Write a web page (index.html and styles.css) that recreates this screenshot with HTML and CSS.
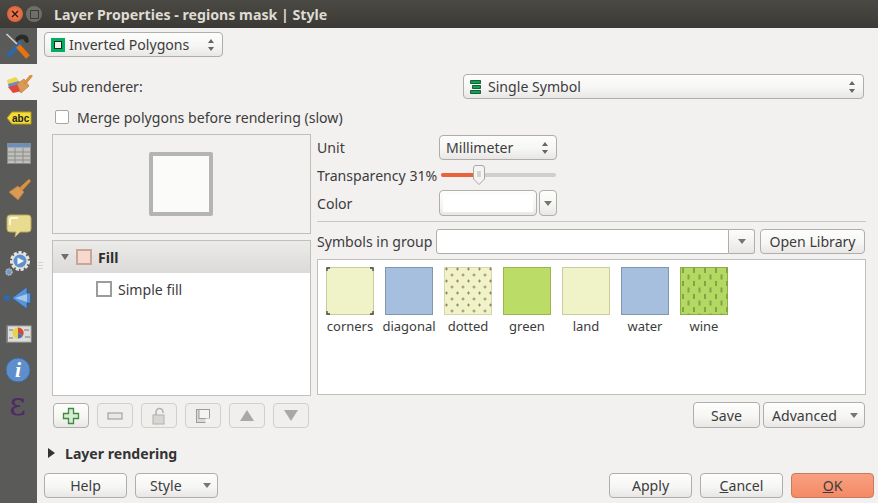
FILE: index.html
```html
<!DOCTYPE html>
<html lang="en">
<head>
  <meta charset="UTF-8">
  <title>Layer Properties - regions mask | Style</title>
  <link rel="stylesheet" href="styles.css">
</head>
<body>
  <header class="titlebar">
    <span class="win-btn win-close">
      <svg width="8" height="8" viewBox="0 0 8 8"><path d="M1 1l6 6M7 1l-6 6" stroke="#3a1a10" stroke-width="1.500"/></svg>
    </span>
    <span class="win-btn win-max"><span class="win-max-box"></span></span>
    <span class="title">Layer Properties - regions mask | Style</span>
  </header>

  <div class="window">
    <nav class="sidebar">
      <div class="tab">
        <svg width="30" height="30" viewBox="0 0 30 30">
          <path d="M2.500 3L14 14" stroke="#cfd2d4" stroke-width="1.600"/>
          <path d="M16 13L5 24" stroke="#2f68a8" stroke-width="4.500" stroke-linecap="round"/>
          <path d="M14 15l10 11" stroke="#e8720c" stroke-width="5"/>
          <path d="M11 8C14 3 20 2 24 6l1 5-3 1-3-4-4 1-2 2z" fill="#2a2a2a"/>
        </svg>
      </div>
      <div class="tab tab-active">
        <svg width="26" height="19" viewBox="0 0 26 19">
          <path d="M0 5l9-3 3 4-11 4z" fill="#ecd84a"/>
          <path d="M1 9l11-3 2 4-12 3z" fill="#6d8cc8"/>
          <path d="M1 12l12-3 2 7-9 2z" fill="#e0483c"/>
          <path d="M10 9l7-5 5 7-8 7z" fill="#d99a58" stroke="#b87a38" stroke-width=".7"/>
          <path d="M18 8l6-7" stroke="#d9913c" stroke-width="3" stroke-linecap="round"/>
        </svg>
      </div>
      <div class="tab">
        <svg width="26" height="18" viewBox="0 0 26 18">
          <path d="M1 9l5-6h19v12H6z" fill="#f3dc3a" stroke="#b49a10"/>
          <text x="6" y="13" class="abc">abc</text>
        </svg>
      </div>
      <div class="tab">
        <svg width="24" height="22" viewBox="0 0 24 22">
          <rect x=".5" y=".5" width="23" height="20" fill="#bfc0bb" stroke="#8c8c88"/>
          <rect x=".5" y=".5" width="23" height="4" fill="#6f8fb8"/>
          <path d="M1 9h22M1 13h22M1 17h22M8 5v16M16 5v16" stroke="#8c8c88"/>
        </svg>
      </div>
      <div class="tab">
        <svg width="24" height="24" viewBox="0 0 24 24">
          <path d="M22 1l2 2-9 10-3-3z" fill="#d9913c"/>
          <path d="M11 8l6 6-6 8-9-8z" fill="#d99a58" stroke="#b87a38" stroke-width=".8"/>
        </svg>
      </div>
      <div class="tab">
        <svg width="26" height="24" viewBox="0 0 26 24">
          <path d="M4 1h18q3 0 3 3v11q0 3-3 3H14l-5 5 1-5H4q-3 0-3-3V4q0-3 3-3z" fill="#e8dc90" stroke="#b8aa58"/>
          <path d="M4 11V6q0-2 2-2h6" stroke="#fff" stroke-width="1.500" fill="none"/>
        </svg>
      </div>
      <div class="tab">
        <svg width="28" height="28" viewBox="0 0 28 28">
          <circle cx="15" cy="13" r="8" fill="#e4e4e2" stroke="#e4e4e2" stroke-width="4" stroke-dasharray="3 1.500"/>
          <circle cx="15" cy="13" r="6.500" fill="#5f90cc"/>
          <path d="M12.500 9.500l6.500 3.500-6.500 3.500z" fill="#fff"/>
          <circle cx="4" cy="24" r="3" fill="#6a9ad0" stroke="#bbb" stroke-width="1.500" stroke-dasharray="1.500 .7"/>
        </svg>
      </div>
      <div class="tab">
        <svg width="30" height="24" viewBox="0 0 30 24">
          <circle cx="3" cy="12" r="3" fill="#2f68b0"/>
          <path d="M8 12L23 1v6h3.500v10H23v6z" fill="#5a94d8" stroke="#2a5a9a" stroke-width=".7"/>
          <path d="M11 12l12-4v8z" fill="#a4c8ee"/>
        </svg>
      </div>
      <div class="tab">
        <svg width="26" height="18" viewBox="0 0 26 18">
          <rect x="1" y="1" width="24" height="16" fill="#dcdcd8" stroke="#aaa"/>
          <path d="M1 1v16" stroke="#777" stroke-width="1.500"/>
          <path d="M18 5h5M19 12h5M3 5h4M3 13h4" stroke="#aaa" stroke-width="2"/>
          <circle cx="12" cy="8" r="5.500" fill="#e8d24a"/>
          <path d="M12 8V2.500a5.500 5.500 0 0 1 5 8z" fill="#d04a3a"/>
          <path d="M12 8l5 2.500a5.500 5.500 0 0 1-5 3z" fill="#4a72b8"/>
        </svg>
      </div>
      <div class="tab">
        <svg width="26" height="26" viewBox="0 0 26 26">
          <circle cx="12" cy="13" r="12" fill="#5f8fca" stroke="#3c6ca8"/>
          <text x="12" y="20" class="info">i</text>
        </svg>
      </div>
      <div class="tab">
        <span class="epsilon">&#949;</span>
      </div>
    </nav>
    <span class="grip"></span>

    <main class="main">
      <div class="renderer-row">
        <div class="btn combo combo-renderer">
          <svg class="combo-icon" width="14" height="14" viewBox="0 0 14 14">
            <rect width="14" height="14" fill="#00b060"/>
            <rect x="3.500" y="3.500" width="7" height="7" fill="#f0f0ee" stroke="#222"/>
          </svg>
          <span class="combo-text">Inverted Polygons</span>
          <span class="spin"></span>
        </div>
      </div>

      <div class="sub-row">
        <span class="sub-label">Sub renderer:</span>
        <div class="btn combo combo-sub">
          <svg class="combo-icon" width="12" height="14" viewBox="0 0 12 14">
            <path d="M.5.5h10v3H.5zM2.500 5.500h8v3h-8zM.5 10.500h10v3H.5z" fill="#00a850" stroke="#0a3a20" stroke-width=".8"/>
          </svg>
          <span class="combo-text">Single Symbol</span>
          <span class="spin"></span>
        </div>
      </div>

      <label class="merge-row">
        <span class="checkbox"></span>
        <span>Merge polygons before rendering (slow)</span>
      </label>

      <div class="columns">
        <section class="left">
          <div class="preview"><div class="preview-square"></div></div>

          <div class="tree">
            <div class="tree-head">
              <span class="tree-arrow"></span>
              <span class="fill-swatch"></span>
              <b>Fill</b>
            </div>
            <div class="tree-child">
              <span class="child-swatch"></span>
              <span>Simple fill</span>
            </div>
          </div>

          <div class="tools">
            <div class="btn tool">
              <svg width="18" height="18" viewBox="0 0 18 18"><path d="M6.500 1.500h5v5h5v5h-5v5h-5v-5h-5v-5h5z" fill="#d8ecd4" stroke="#3c8a3c" stroke-width="1.300"/></svg>
            </div>
            <div class="btn tool tool-off">
              <svg width="16" height="8" viewBox="0 0 16 8"><rect x="1" y="1" width="14" height="6" fill="#e8e8e6" stroke="#a8a8a4" stroke-width="1.300"/></svg>
            </div>
            <div class="btn tool tool-off">
              <svg width="14" height="18" viewBox="0 0 14 18"><path d="M4 8V5a3.500 3.500 0 0 1 7 0v1" fill="none" stroke="#b0b0ac" stroke-width="1.500"/><rect x="1" y="8" width="11" height="9" fill="#d6d6d2" stroke="#b0b0ac"/></svg>
            </div>
            <div class="btn tool tool-off">
              <svg width="16" height="16" viewBox="0 0 16 16"><rect x="1.500" y="1.500" width="13" height="13" fill="#d8d8d4" stroke="#9c9c98"/><rect x="4" y="1.500" width="10.500" height="9" fill="#f4f4f2" stroke="#9c9c98"/><rect x="10.500" y="10.500" width="4.500" height="4.500" fill="#f4f4f2"/></svg>
            </div>
            <div class="btn tool tool-off"><span class="tri-up"></span></div>
            <div class="btn tool tool-off"><span class="tri-down"></span></div>
          </div>
        </section>

        <section class="right">
          <div class="prop-row prop-unit">
            <span class="prop-label">Unit</span>
            <div class="btn combo combo-unit">
              <span class="combo-text">Millimeter</span>
              <span class="spin"></span>
            </div>
          </div>
          <div class="prop-row prop-slider">
            <span class="prop-label">Transparency 31%</span>
            <div class="slider">
              <div class="slider-done"></div>
              <svg class="slider-handle" width="12" height="20" viewBox="0 0 12 20">
                <path d="M.5 3q0-2.500 2.500-2.500h6q2.500 0 2.500 2.500v11L6 19.500.5 14z" fill="#f4f4f2" stroke="#a8a6a2"/>
                <path d="M4 7h4M4 9h4M4 11h4" stroke="#b4b4b0"/>
              </svg>
            </div>
          </div>
          <div class="prop-row prop-color">
            <span class="prop-label">Color</span>
            <div class="btn color-btn"><span class="color-fill"></span></div>
            <div class="btn color-arrow"><span class="caret"></span></div>
          </div>
          <hr class="rule">
          <div class="group-row">
            <span class="group-label">Symbols in group</span>
            <div class="group-input"></div>
            <div class="group-drop"><span class="caret"></span></div>
            <div class="btn open-lib">Open Library</div>
          </div>
          <div class="symbols">
            <figure class="symbol">
              <svg width="48" height="48" viewBox="0 0 48 48">
                <rect x=".5" y=".5" width="47" height="47" fill="#f0f3c8" stroke="#c8cc9c"/>
                <path d="M1 4V1h3M44 1h3v3M1 44v3h3M47 44v3h-3" fill="none" stroke="#444" stroke-width="1.300"/>
              </svg>
              <figcaption>corners</figcaption>
            </figure>
            <figure class="symbol">
              <svg width="48" height="48" viewBox="0 0 48 48"><rect x=".5" y=".5" width="47" height="47" fill="#a6bfde" stroke="#7f98ae"/></svg>
              <figcaption>diagonal</figcaption>
            </figure>
            <figure class="symbol">
              <svg width="48" height="48" viewBox="0 0 48 48">
                <defs>
                  <pattern id="dots" width="11" height="12" patternUnits="userSpaceOnUse">
                    <path d="M1 2h3M2.500 .5v3M6.500 8h3M8 6.500v3" stroke="#9a8468" stroke-width="1"/>
                  </pattern>
                </defs>
                <rect x=".5" y=".5" width="47" height="47" fill="#f0f3c8" stroke="#d4d8a8"/>
                <rect width="48" height="48" fill="url(#dots)"/>
              </svg>
              <figcaption>dotted</figcaption>
            </figure>
            <figure class="symbol">
              <svg width="48" height="48" viewBox="0 0 48 48"><rect x=".5" y=".5" width="47" height="47" fill="#bcdc68" stroke="#98b84c"/></svg>
              <figcaption>green</figcaption>
            </figure>
            <figure class="symbol">
              <svg width="48" height="48" viewBox="0 0 48 48"><rect x=".5" y=".5" width="47" height="47" fill="#f0f3c8" stroke="#c8cc9c"/></svg>
              <figcaption>land</figcaption>
            </figure>
            <figure class="symbol">
              <svg width="48" height="48" viewBox="0 0 48 48"><rect x=".5" y=".5" width="47" height="47" fill="#a6bfde" stroke="#7f98ae"/></svg>
              <figcaption>water</figcaption>
            </figure>
            <figure class="symbol">
              <svg width="48" height="48" viewBox="0 0 48 48">
                <defs>
                  <pattern id="vines" width="11" height="13" patternUnits="userSpaceOnUse">
                    <rect x="2" y="1" width="2" height="5" fill="#7ca648"/>
                    <rect x="7.500" y="7.500" width="2" height="5" fill="#7ca648"/>
                  </pattern>
                </defs>
                <rect x=".5" y=".5" width="47" height="47" fill="#b4d862" stroke="#8cb048"/>
                <rect width="48" height="48" fill="url(#vines)"/>
              </svg>
              <figcaption>wine</figcaption>
            </figure>
          </div>
          <div class="save-row">
            <div class="btn save">Save</div>
            <div class="btn advanced"><span>Advanced</span><span class="caret"></span></div>
          </div>
        </section>
      </div>

      <div class="layer-rendering">
        <span class="collapsed-arrow"></span>
        <b>Layer rendering</b>
      </div>

      <footer class="dialog-buttons">
        <div class="btn foot">Help</div>
        <div class="btn foot foot-style"><span>Style</span><span class="caret"></span></div>
        <div class="foot-gap"></div>
        <div class="btn foot">Apply</div>
        <div class="btn foot"><span><u>C</u>ancel</span></div>
        <div class="btn foot foot-ok"><span><u>O</u>K</span></div>
      </footer>
    </main>
  </div>
</body>
</html>
```

FILE: styles.css
```css
html,
body {
  margin: 0;
  padding: 0;
}
body {
  width: 878px;
  height: 503px;
  overflow: hidden;
  background: #f2f1f0;
  color: #3c3c3c;
  font-family: "Noto Sans", "Open Sans", sans-serif;
  font-size: 14.1px;
  display: flex;
  flex-direction: column;
}
figure {
  margin: 0;
}

/* title bar */
.titlebar {
  height: 28px;
  flex: none;
  display: flex;
  align-items: center;
  background: linear-gradient(#4a4943, #3b3a36);
  color: #dfdbd2;
  box-sizing: border-box;
  padding-left: 7px;
}
.win-btn {
  width: 16px;
  height: 16px;
  border-radius: 50%;
  display: flex;
  align-items: center;
  justify-content: center;
  margin-right: 3px;
}
.win-close {
  background: radial-gradient(#f08a60, #d9502a);
}
.win-max {
  background: #6f6e68;
}
.win-max-box {
  width: 7px;
  height: 7px;
  border: 1px solid #3b3a36;
}
.title {
  font-weight: bold;
  font-size: 14.2px;
  margin-left: 9px;
  padding-top: 1px;
}

/* side tabs */
.window {
  flex: 1;
  display: flex;
  min-height: 0;
  position: relative;
}
.sidebar {
  width: 37px;
  flex: none;
  background: #5a5a58;
  display: flex;
  flex-direction: column;
}
.tab {
  height: 36px;
  display: flex;
  align-items: center;
  justify-content: center;
}
.tab-active {
  box-sizing: border-box;
  background: #f2f1f0;
  padding: 4px 0 0 2px;
}
.grip {
  position: absolute;
  left: 38px;
  top: 234px;
  width: 5px;
  height: 8px;
  background: repeating-linear-gradient(#d4d3d0 0 1px, transparent 1px 3px);
}
.abc {
  font-family: "Liberation Sans", sans-serif;
  font-size: 10px;
  font-weight: bold;
  fill: #222;
}
.info {
  font-family: "Liberation Serif", serif;
  font-size: 22px;
  font-weight: bold;
  font-style: italic;
  fill: #fff;
  text-anchor: middle;
}
.epsilon {
  font-family: "DejaVu Serif", serif;
  font-size: 32px;
  line-height: 26px;
  color: #4f2a66;
  margin: -4px 2px 0 0;
}

/* shared widgets */
.main {
  flex: 1;
  min-width: 0;
  box-sizing: border-box;
  padding: 4px 4px 4px 7px;
  display: flex;
  flex-direction: column;
}
.btn {
  box-sizing: border-box;
  border: 1px solid #b0aeab;
  border-radius: 4px;
  background: linear-gradient(#fdfdfc, #f6f6f5 55%, #e8e7e5);
  display: flex;
  align-items: center;
  justify-content: center;
}
.combo {
  justify-content: flex-start;
  padding: 0 6px;
  height: 25px;
}
.combo-icon {
  flex: none;
  margin-right: 4px;
}
.combo-sub .combo-icon {
  margin-right: 6px;
}
.combo-text {
  flex: 1;
}
.spin {
  width: 0;
  height: 12px;
  position: relative;
  flex: none;
  margin-right: 5px;
}
.spin::before,
.spin::after {
  content: "";
  position: absolute;
  left: -3px;
  border-left: 3px solid transparent;
  border-right: 3px solid transparent;
}
.spin::before {
  top: 0;
  border-bottom: 4px solid #666;
}
.spin::after {
  bottom: 0;
  border-top: 4px solid #666;
}
.caret {
  width: 0;
  height: 0;
  border-left: 4px solid transparent;
  border-right: 4px solid transparent;
  border-top: 5px solid #77766f;
}

/* top rows */
.renderer-row {
  display: flex;
}
.combo-renderer {
  width: 179px;
}
.sub-row {
  display: flex;
  align-items: center;
  justify-content: space-between;
  margin: 17px 10px 0 8px;
}
.combo-sub {
  width: 401px;
}
.merge-row {
  display: flex;
  align-items: center;
  height: 20px;
  margin: 8px 0 0 11px;
}
.checkbox {
  width: 14px;
  height: 14px;
  box-sizing: border-box;
  border: 1px solid #a8a6a2;
  border-radius: 2px;
  background: #fff;
  margin-right: 8px;
}

/* two columns */
.columns {
  display: flex;
  margin: 7px 8px 0 8px;
}
.left {
  width: 259px;
  flex: none;
}
.preview {
  box-sizing: border-box;
  height: 100px;
  border: 1px solid #c0bfbc;
  display: flex;
  align-items: center;
  justify-content: center;
  padding-right: 1px;
}
.preview-square {
  width: 64px;
  height: 64px;
  box-sizing: border-box;
  border: 4px solid #b4b4b2;
  border-radius: 2px;
  background: #fbfbfa;
}
.tree {
  box-sizing: border-box;
  height: 156px;
  margin-top: 6px;
  border: 1px solid #c0bfbc;
  background: #fff;
}
.tree-head {
  height: 32px;
  display: flex;
  align-items: center;
  background: linear-gradient(#ebebea, #dbdad8);
  color: #2e2e2e;
  padding-left: 8px;
}
.tree-arrow {
  border-left: 4px solid transparent;
  border-right: 4px solid transparent;
  border-top: 6px solid #6f6e6a;
  margin-right: 7px;
}
.fill-swatch {
  width: 16px;
  height: 16px;
  box-sizing: border-box;
  border: 2px solid #c8a698;
  background: #f6d8cc;
  margin-right: 6px;
}
.tree-child {
  display: flex;
  align-items: center;
  height: 32px;
  padding-left: 43px;
}
.child-swatch {
  width: 16px;
  height: 16px;
  box-sizing: border-box;
  border: 2px solid #9c9c9c;
  background: #fff;
  margin-right: 6px;
}
.tools {
  display: flex;
  gap: 8px;
  margin: 7px 0 0 1px;
}
.tool {
  width: 36px;
  height: 25px;
}
.tool-off {
  background: #f0efed;
  border-color: #d0cfcc;
}
.tri-up {
  border-left: 7px solid transparent;
  border-right: 7px solid transparent;
  border-bottom: 11px solid #a8a8a4;
}
.tri-down {
  border-left: 7px solid transparent;
  border-right: 7px solid transparent;
  border-top: 11px solid #a8a8a4;
}

/* right column */
.right {
  flex: 1;
  min-width: 0;
  margin-left: 6px;
}
.prop-row {
  display: flex;
  align-items: center;
}
.prop-label {
  width: 122px;
  flex: none;
}
.prop-unit {
  margin-top: 1px;
  margin-right: 309px;
}
.combo-unit {
  flex: 1;
}
.prop-slider {
  height: 20px;
  margin-top: 5px;
}
.slider {
  position: relative;
  width: 115px;
  height: 4px;
  margin-left: 2px;
  border-radius: 2px;
  background: #d0cfcc;
}
.slider-done {
  width: 36px;
  height: 4px;
  border-radius: 2px;
  background: #e8623a;
}
.slider-handle {
  position: absolute;
  left: 32px;
  top: -8px;
}
.prop-color {
  margin-top: 5px;
}
.color-btn {
  width: 98px;
  height: 26px;
  padding: 3px;
}
.color-fill {
  display: block;
  width: 100%;
  height: 100%;
  background: #fff;
}
.color-arrow {
  width: 18px;
  height: 26px;
  margin-left: 2px;
}
.rule {
  border: none;
  border-top: 1px solid #c8c7c4;
  margin: 5px 0 0;
}
.group-row {
  display: flex;
  align-items: center;
  margin-top: 7px;
  margin-right: 1px;
}
.group-label {
  width: 119px;
  flex: none;
}
.group-input {
  width: 293px;
  height: 25px;
  box-sizing: border-box;
  border: 1px solid #b0aeab;
  border-radius: 3px 0 0 3px;
  background: #fff;
}
.group-drop {
  width: 26px;
  height: 25px;
  box-sizing: border-box;
  border: 1px solid #b0aeab;
  border-left: none;
  border-radius: 0 3px 3px 0;
  background: linear-gradient(#fdfdfc, #e8e7e5);
  display: flex;
  align-items: center;
  justify-content: center;
}
.open-lib {
  width: 105px;
  height: 25px;
  margin-left: 5px;
}
.symbols {
  box-sizing: border-box;
  height: 136px;
  margin-top: 5px;
  border: 1px solid #c0bfbc;
  background: #fff;
  display: flex;
  gap: 1px;
  padding: 7px 0 0 3px;
}
.symbol {
  width: 58px;
  display: flex;
  flex-direction: column;
  align-items: center;
  font-size: 13px;
}
.symbol svg {
  display: block;
  margin-bottom: 2px;
}
.save-row {
  display: flex;
  justify-content: flex-end;
  gap: 3px;
  margin-top: 7px;
  margin-right: 1px;
}
.save {
  width: 67px;
  height: 26px;
}
.advanced {
  width: 102px;
  height: 26px;
  justify-content: space-between;
  padding: 0 6px 0 8px;
}

/* bottom */
.layer-rendering {
  display: flex;
  align-items: center;
  height: 20px;
  margin: 15px 0 0 4px;
  color: #333;
}
.collapsed-arrow {
  border-top: 5px solid transparent;
  border-bottom: 5px solid transparent;
  border-left: 7px solid #333;
  margin-right: 10px;
}
.dialog-buttons {
  display: flex;
  gap: 8px;
  margin-top: 10px;
}
.foot {
  width: 83px;
  height: 25px;
}
.foot-style {
  justify-content: space-between;
  padding: 0 6px 0 14px;
}
.foot-gap {
  flex: 1;
}
.foot-ok {
  background: linear-gradient(#f8a080, #f48a66);
  border-color: #c87a5c;
}
```
